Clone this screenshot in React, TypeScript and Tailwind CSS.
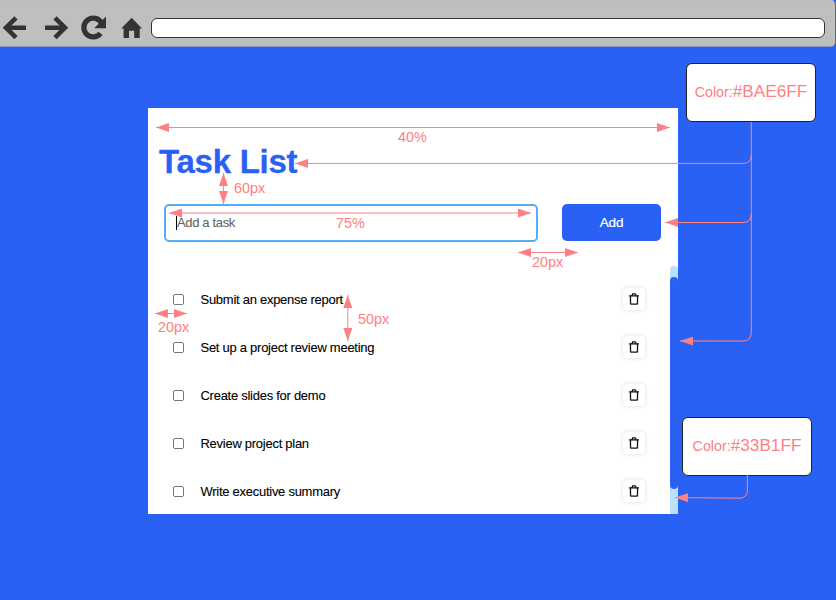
import React from "react";

const tasks = [
  { label: "Submit an expense report", width: "w-[142px]" },
  { label: "Set up a project review meeting", width: "w-[174px]" },
  { label: "Create slides for demo", width: "w-[125px]" },
  { label: "Review project plan", width: "w-[108px]" },
  { label: "Write executive summary", width: "w-[140px]" },
];

function BrowserBar() {
  return (
    <header className="flex h-[47px] shrink-0 items-start rounded-r-[5px] border-y border-r border-[#666] border-t-[#bdbdbd] border-b-[#8d98bd] bg-[#bfbfbf] pr-[10px]">
      <svg className="mt-[9px] h-[36px] w-[151px] shrink-0" viewBox="0 10 151 36" fill="none" stroke="#333" strokeWidth="4.6">
        <path d="M26 27.7H7M16 17.8 6 27.7 16 37.6" />
        <path d="M45 27.7H64M55 17.8 65 27.7 55 37.6" />
        <path d="M100.6 33.4A9.4 9.4 0 1 1 101.6 23.2" strokeWidth="5.2" />
        <path d="M106 16.5V28.2H94.2Z" fill="#333" stroke="none" />
        <path d="M131.7 17.7 142 28.4H139.7V38H134.2V30.8H129V38H123.6V28.4H121.2Z" fill="#333" stroke="none" />
      </svg>
      <div className="mt-[17px] h-[20px] flex-1 rounded-[6px] border border-[#333] bg-white" />
    </header>
  );
}

function TrashIcon() {
  return (
    <svg className="h-[12px] w-[10px]" viewBox="0 0 10 12" fill="none" stroke="#111" strokeWidth="1.3">
      <path d="M0 2.9H10M2.9 2.8 3.7 .9H6.3L7.1 2.8M1.5 3V10.3Q1.5 11.2 2.4 11.2H7.6Q8.5 11.2 8.5 10.3V3" />
    </svg>
  );
}

function TaskRow({ label, width }: { label: string; width: string }) {
  return (
    <li className="flex h-[48px] items-center pr-[25px] pl-[25px]">
      <span className="mt-[1px] h-[11px] w-[11px] rounded-[2px] border border-[#767680] bg-white" />
      <span className={`mt-[1px] ml-[16.5px] whitespace-nowrap text-[13px] leading-[16px] tracking-[-0.27px] text-black [-webkit-text-stroke:0.1px_black] ${width}`}>{label}</span>
      <button className="ml-auto flex h-[22px] w-[22px] items-center justify-center rounded-[4px] bg-white shadow-[0_0_4px_rgba(30,30,70,0.16)]">
        <TrashIcon />
      </button>
    </li>
  );
}

function Annotations() {
  return (
    <svg className="pointer-events-none absolute inset-0 h-[600px] w-[836px]" viewBox="0 0 836 600" fill="none" stroke="#ff8589">
      <defs>
        <marker id="arrow" viewBox="0 0 13 9" refX="13" refY="4.5" markerWidth="13" markerHeight="9" markerUnits="userSpaceOnUse" orient="auto-start-reverse">
          <path d="M0 0 13 4.5 0 9Z" fill="#ff8083" stroke="none" />
        </marker>
      </defs>
      <path d="M156 127.5H670" markerStart="url(#arrow)" markerEnd="url(#arrow)" />
      <path d="M223.5 173V204" markerStart="url(#arrow)" markerEnd="url(#arrow)" />
      <path d="M169 213H531" stroke="#ffc1c4" strokeWidth="2" markerStart="url(#arrow)" markerEnd="url(#arrow)" />
      <path d="M518 252.5H578" markerStart="url(#arrow)" markerEnd="url(#arrow)" />
      <path d="M155 313.5H187" markerStart="url(#arrow)" markerEnd="url(#arrow)" />
      <path d="M347.8 295V341" markerStart="url(#arrow)" markerEnd="url(#arrow)" />
      <path d="M751.3 122V155Q751.3 163.4 743 163.4H295" markerEnd="url(#arrow)" />
      <path d="M751.3 155V214Q751.3 222.5 743 222.5H665" markerEnd="url(#arrow)" />
      <path d="M751.3 214V332Q751.3 341 743 341H680" markerEnd="url(#arrow)" />
      <path d="M747.4 475V490Q747.4 498.2 739 498.2L675 497.6" markerEnd="url(#arrow)" />
    </svg>
  );
}

function ColorNote({ code, className }: { code: string; className: string }) {
  return (
    <div className={`absolute flex h-[59px] w-[130px] items-baseline justify-center rounded-[6px] border border-[#222] bg-white pt-[14px] whitespace-nowrap text-[#ff8083] ${className}`}>
      <span className="text-[14.3px] leading-[26px]">Color:</span>
      <span className="text-[17.2px] leading-[26px]">{code}</span>
    </div>
  );
}

function Measure({ text, className }: { text: string; className: string }) {
  return <span className={`absolute text-[14.4px] leading-[16px] text-[#ff8083] ${className}`}>{text}</span>;
}

export default function App() {
  return (
    <div className="relative flex h-[600px] w-[836px] flex-col overflow-hidden bg-[#2961f5] font-['Liberation_Sans',Arial,sans-serif]">
      <BrowserBar />
      <main className="mt-[61px] ml-[148px] flex h-[406px] w-[530px] flex-col bg-white">
        <h1 className="mt-[35px] ml-[11px] text-[33px] leading-[38px] font-bold tracking-[-0.25px] text-[#2961f5] [-webkit-text-stroke:0.3px_#2961f5]">Task List</h1>
        <div className="mt-[23px] flex h-[38px] pr-[17px] pl-[16px]">
          <div className="flex w-[374px] items-center rounded-[5px] border-2 border-[#55adf5] pl-[10px] text-[13px] text-[#666]">
            <span className="h-[14px] w-px bg-black" />
            <span className="whitespace-nowrap tracking-[-0.35px] [-webkit-text-stroke:0.1px_#666]">Add a task</span>
          </div>
          <button className="ml-auto h-[37px] w-[99px] rounded-[5px] bg-[#2961f5] pt-[2px] text-[13.5px] tracking-[-0.1px] text-white [-webkit-text-stroke:0.2px_white]">Add</button>
        </div>
        <div className="mt-[24px] flex min-h-0 flex-1">
          <ul className="flex-1 overflow-hidden pt-[9px]">
            {tasks.map((task) => (
              <TaskRow key={task.label} {...task} />
            ))}
          </ul>
          <div className="w-[8px] rounded-t-[4px] bg-[#b9e1fe] pt-[11px]">
            <div className="h-[212px] rounded-[4px] bg-[#2961f5]" />
          </div>
        </div>
      </main>
      <ColorNote code="#BAE6FF" className="top-[63px] left-[686px]" />
      <ColorNote code="#33B1FF" className="top-[417px] left-[682px]" />
      <Annotations />
      <Measure text="40%" className="top-[129px] left-[398px]" />
      <Measure text="60px" className="top-[180px] left-[234px]" />
      <Measure text="75%" className="top-[215px] left-[336px]" />
      <Measure text="20px" className="top-[254px] left-[532px]" />
      <Measure text="20px" className="top-[319px] left-[158px]" />
      <Measure text="50px" className="top-[311px] left-[358px]" />
    </div>
  );
}
